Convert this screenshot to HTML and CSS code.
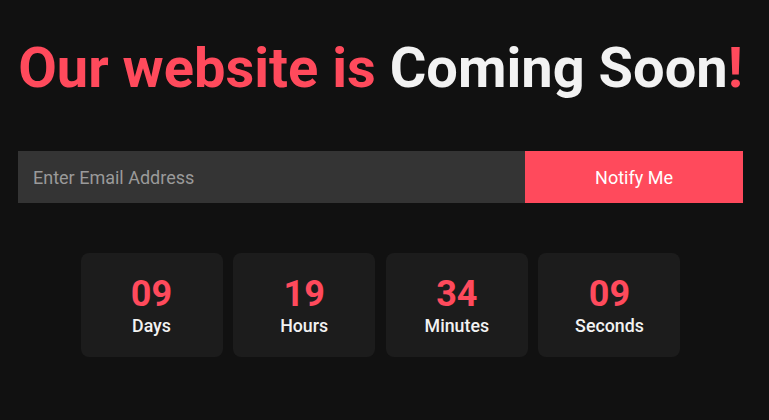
FILE: index.html
```html
<!DOCTYPE html>
<html>
<head>
<meta charset="utf-8">
<link rel="stylesheet" href="styles.css">
</head>
<body>
<main class="page">
  <h1 class="title"><span class="accent">Our website is</span> Coming Soon<span class="accent">!</span></h1>
  <form class="notify">
    <input class="email" type="text" placeholder="Enter Email Address">
    <button class="btn" type="button">Notify Me</button>
  </form>
  <div class="countdown">
    <div class="card"><div class="num">09</div><div class="label">Days</div></div>
    <div class="card"><div class="num">19</div><div class="label">Hours</div></div>
    <div class="card"><div class="num">34</div><div class="label">Minutes</div></div>
    <div class="card"><div class="num">09</div><div class="label">Seconds</div></div>
  </div>
</main>
</body>
</html>
```
FILE: styles.css
```css
html, body {
  margin: 0;
  padding: 0;
  background: #111111;
  font-family: Roboto, "Liberation Sans", sans-serif;
}
.page {
  width: 725px;
  margin-left: 18px;
  padding-top: 30px;
}
.title {
  margin: 0;
  font-size: 56px;
  font-weight: 700;
  line-height: 76px;
  color: #f2f2f2;
  text-align: center;
  white-space: nowrap;
}
.accent { color: #ff4a5c; }
.notify {
  display: flex;
  margin-top: 45px;
  height: 52px;
}
.email {
  flex: 1;
  border: none;
  outline: none;
  background: #343434;
  color: #ddd;
  font-family: inherit;
  font-size: 18px;
  padding: 0 15px;
}
.email::placeholder { color: #9a9a9a; }
.btn {
  width: 218px;
  border: none;
  background: #ff4a5c;
  color: #fff;
  font-family: inherit;
  font-size: 18px;
}
.countdown {
  display: flex;
  justify-content: center;
  gap: 10.67px;
  margin-top: 50px;
}
.card {
  width: 142px;
  height: 104px;
  background: #1c1c1c;
  border-radius: 8px;
  display: flex;
  flex-direction: column;
  align-items: center;
  justify-content: center;
}
.num {
  color: #ff4a5c;
  font-size: 36px;
  font-weight: 700;
  line-height: 38px;
  margin-top: 2px;
}
.label {
  color: #f2f2f2;
  font-size: 17.8px;
  font-weight: 500;
  line-height: 22px;
  margin-top: 2px;
}
```
